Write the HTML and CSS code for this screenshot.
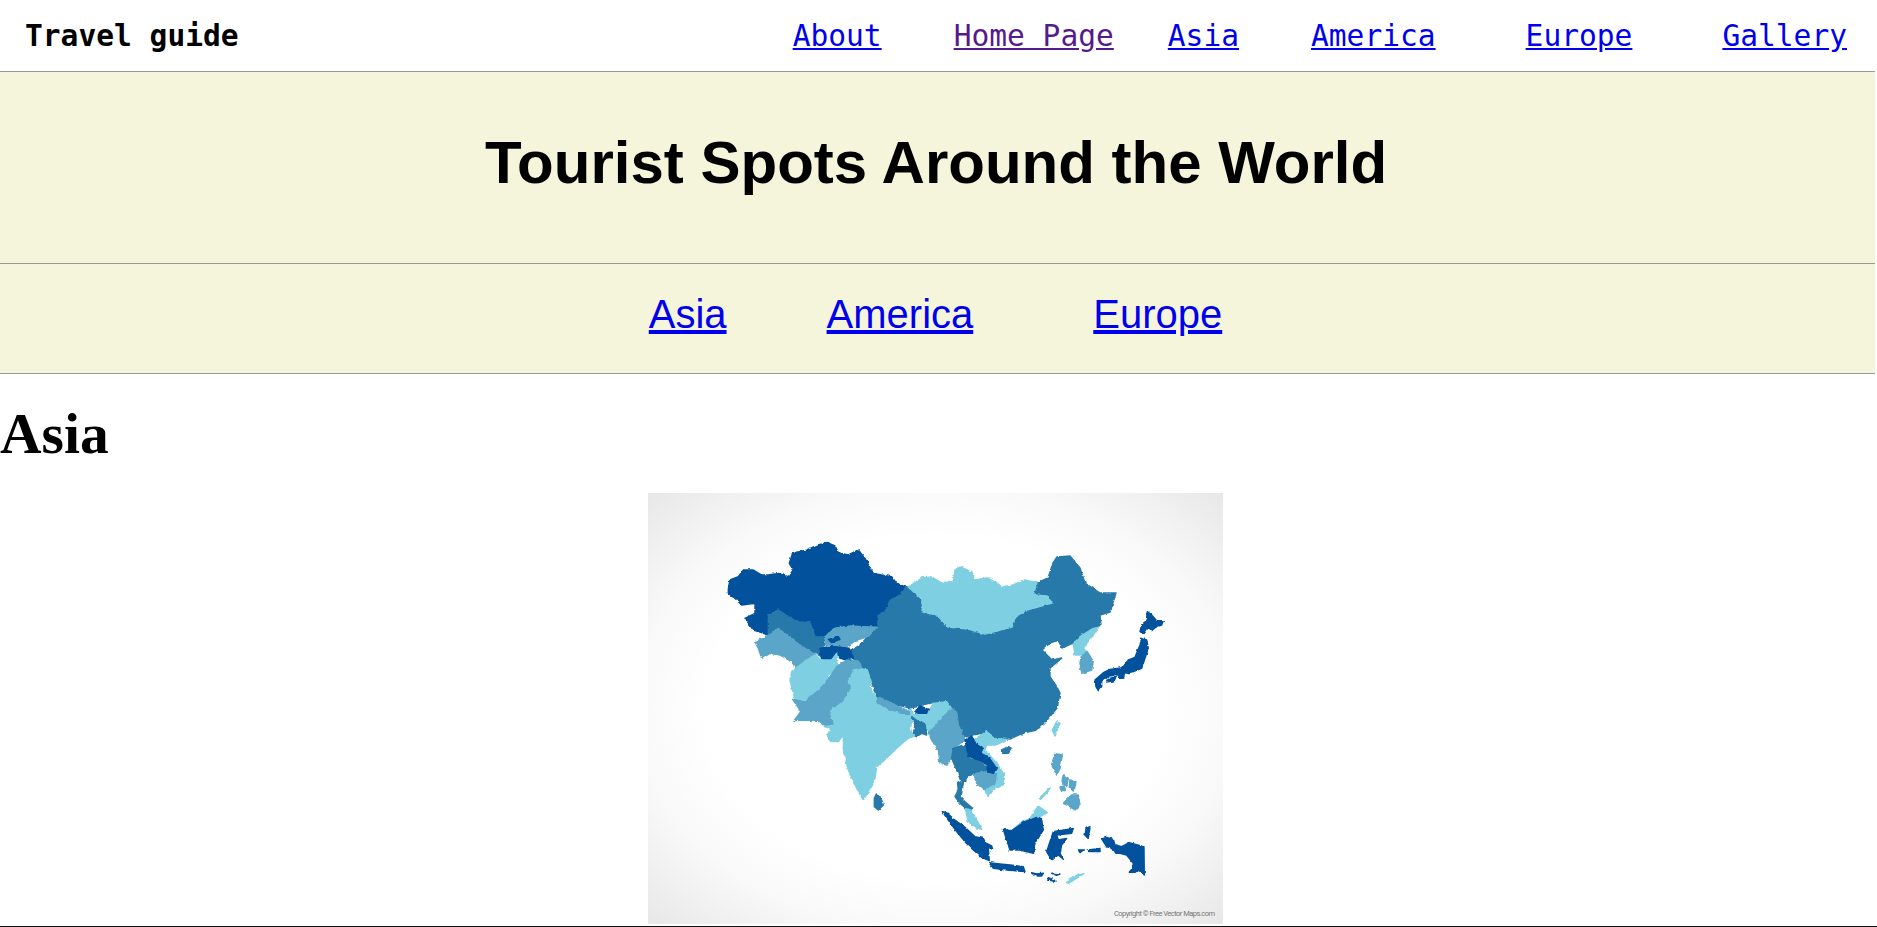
FILE: index.html
```html
<!DOCTYPE html>
<html lang="en">
<head>
  <meta charset="UTF-8" />
  <title>Travel guide</title>
  <meta name="viewport" content="width=device-width, initial-scale=1.0" />
  <link rel="stylesheet" href="styles.css">
</head>
<body>

  <nav class="topnav">
    <div class="brand">Travel guide</div>
    <div class="toplinks">
      <a href="#about">About</a>
      <a href="#home" class="visited wider">Home Page</a>
      <a href="#asia">Asia</a>
      <a href="#america" class="wider">America</a>
      <a href="#europe" class="widest">Europe</a>
      <a href="#gallery" class="widest">Gallery</a>
    </div>
  </nav>

  <header class="banner">
    <h1>Tourist Spots Around the World</h1>
  </header>

  <div class="subnav">
    <a href="#asia">Asia</a>
    <a href="#america">America</a>
    <a href="#europe" class="last">Europe</a>
  </div>

  <h2 class="region" id="asia">Asia</h2>

  <svg class="map" viewBox="648 493 575 431" role="img" aria-label="Map of Asia">
    <defs>
      <radialGradient id="vignette" cx="50%" cy="50%" r="72%">
        <stop offset="0.55" stop-color="#ffffff" />
        <stop offset="0.72" stop-color="#f9f9f9" />
        <stop offset="1" stop-color="#e6e6e6" />
      </radialGradient>
      <filter id="rough" x="0" y="0" width="100%" height="100%" color-interpolation-filters="sRGB">
        <feTurbulence type="fractalNoise" baseFrequency=".25" numOctaves="2" seed="4" result="noise" />
        <feDisplacementMap in="SourceGraphic" in2="noise" scale="3" xChannelSelector="R" yChannelSelector="G" />
        <feGaussianBlur stdDeviation=".6" />
      </filter>
    </defs>
    <rect x="648" y="493" width="575" height="431" fill="url(#vignette)" />

    <g filter="url(#rough)">
      <rect x="648" y="493" width="575" height="431" fill="none" />

      <!-- china, page coordinates -->
      <polygon class="mid" points="905,587 908,587 923,600 922,612 937,615 948,627 968,629 985,634 1012,627 1015,617 1027,610 1052,603 1047,596 1033,595 1037,583 1048,578 1053,563 1057,557 1070,556 1080,568 1085,583 1100,593 1116,593 1110,612 1100,615 1101,625 1093,628 1080,637 1073,643 1062,648 1058,640 1050,643 1042,650 1047,655 1052,660 1062,658 1050,668 1050,677 1057,687 1060,693 1057,708 1047,720 1037,730 1023,733 1010,739 993,738 988,732 973,735 965,737 957,722 953,710 947,702 930,703 915,707 910,708 890,703 877,698 872,683 868,673 857,663 848,652 860,645 877,627 877,615 885,610 888,600 900,593" />
      <polygon class="light" points="908,587 922,578 932,577 940,582 953,583 955,570 960,567 972,572 975,580 987,578 997,583 1002,587 1013,585 1025,580 1037,583 1033,595 1047,596 1052,603 1027,610 1015,617 1012,627 985,634 968,629 948,627 937,615 922,612 923,600" />

      <!-- central asia, crop at 700,520 x3 -->
      <g transform="translate(700 520) scale(.3333)">
        <polygon class="dark" points="85,205 90,180 115,170 130,150 160,150 185,165 205,165 235,160 265,170 280,150 268,130 278,100 320,90 355,75 380,67 405,78 415,98 445,105 475,90 495,115 520,160 545,165 575,170 590,190 615,200 600,220 565,240 555,270 530,285 530,320 490,318 450,320 400,325 375,350 345,350 330,310 290,305 235,270 205,285 205,345 175,335 160,330 135,295 165,280 165,250 125,255 105,235 85,220" />
        <polygon class="mid" points="205,285 235,270 290,305 330,308 345,350 372,352 375,375 360,385 365,410 345,400 320,385 285,365 260,345 235,325 210,345 205,345" />
        <polygon class="pale" points="165,365 190,355 205,345 235,325 260,345 285,365 345,405 320,420 290,447 275,425 240,405 210,400 185,415 175,385" />
        <polygon class="dark" points="360,385 395,378 420,380 450,385 460,415 440,420 420,415 410,400 395,420 365,420" />
        <polygon class="pale" points="375,352 400,325 450,318 490,320 530,322 505,350 470,360 440,380 400,375 380,375" />
        <polygon class="dark" points="385,358 415,350 420,358 395,368" />
        <polygon class="light" points="275,455 320,420 345,405 365,420 395,420 410,400 415,440 385,465 370,510 340,520 325,540 285,540 270,480" />
      </g>

      <!-- south and southeast mainland, crop at 780,670 x3 -->
      <g transform="translate(780 670) scale(.3333)">
        <polygon class="pale" points="38,88 75,95 105,70 130,50 150,20 170,-10 200,-30 240,-25 245,0 205,35 215,55 190,95 150,125 165,165 135,170 115,150 42,152 62,125 50,105" />
        <polygon class="light" points="205,35 222,0 240,-5 262,0 275,40 270,55 290,85 330,110 390,135 395,155 390,175 400,200 385,205 350,235 320,265 290,290 285,325 275,350 250,390 235,365 205,300 190,240 190,195 175,215 155,215 140,195 155,180 135,170 165,165 150,125 190,95 215,55" />
        <polygon class="pale" points="295,80 345,105 390,125 390,135 330,118 290,98" />
        <polygon class="light" points="390,115 400,130 440,135 460,100 500,95 515,115 490,140 465,175 450,195 435,160 415,155 395,140" />
        <polygon class="dark" points="405,125 420,108 445,118 440,130 415,130" />
        <polygon class="mid" points="395,140 415,155 435,160 440,195 425,190 410,200 400,190 405,165" />
        <polygon class="pale" points="490,140 515,115 530,125 535,165 555,210 520,235 515,265 500,285 480,280 475,240 455,210 445,190 465,170" />
        <polygon class="light" points="580,210 620,185 645,205 680,208 650,225 620,225 615,240 650,280 670,310 670,345 640,360 625,380 615,360 610,358 645,340 650,300 625,260 600,250 610,235 590,225" />
        <polygon class="mid" points="520,235 550,225 575,255 565,265 590,270 620,290 620,305 580,310 555,330 545,340 530,300 515,265" />
        <polygon class="mid" points="532,335 550,340 545,370 540,380 555,395 578,415 565,422 540,400 525,380 535,360" />
        <polygon class="pale" points="580,312 620,305 650,310 645,340 610,358 590,340" />
        <polygon class="dark" points="555,210 575,198 590,225 610,235 600,250 625,260 650,295 640,310 622,305 622,285 595,270 565,258" />
        <polygon class="mid" points="665,240 685,230 695,235 685,250 670,250" />
        <polygon class="mid" points="290,370 305,390 310,405 295,420 283,410 283,385" />
      </g>

      <!-- korea, crop at 880,540 x3 -->
      <g transform="translate(880 540) scale(.3333)">
        <polygon class="light" points="580,312 600,290 640,265 655,262 640,285 620,310 610,325 620,335 600,345 585,345" />
        <polygon class="pale" points="605,345 622,335 640,365 635,390 605,400 600,370" />
      </g>

      <!-- japan and taiwan, crop at 960,580 x3 -->
      <g transform="translate(960 580) scale(.3333)">
        <polygon class="dark" points="405,300 430,278 450,268 488,263 505,240 525,232 540,195 545,175 560,180 565,205 555,235 545,265 520,275 495,280 490,295 478,295 472,282 445,290 425,300 425,320 415,332 408,320" />
        <polygon class="dark" points="445,296 470,290 462,302 440,306" />
        <polygon class="dark" points="562,95 575,105 590,122 610,122 605,135 590,140 575,152 560,145 550,160 540,155 545,135 555,130 560,115" />
        <polygon class="light" points="290,425 300,430 285,468 277,450" />
      </g>

      <!-- philippines, crop at 900,700 x3 -->
      <g transform="translate(900 700) scale(.3333)">
        <polygon class="pale" points="465,160 487,165 480,205 470,225 455,195" />
        <polygon class="pale" points="490,225 505,235 500,260 485,250" />
        <polygon class="pale" points="510,240 528,245 522,275 508,262" />
        <polygon class="pale" points="480,262 492,258 496,272 484,272" />
        <polygon class="pale" points="515,285 535,285 540,315 525,330 510,320 490,310" />
        <polygon class="light" points="418,295 450,263 448,270 422,298" />
      </g>

      <!-- indonesia and malaysia, crop at 840,740 x3 -->
      <g transform="translate(840 740) scale(.3333)">
        <polygon class="light" points="375,205 395,212 410,240 425,268 410,262 385,245" />
        <polygon class="light" points="518,270 540,250 570,235 595,198 622,218 600,230 575,232 555,245 525,272" />
        <polygon class="dark" points="490,268 515,272 555,245 590,232 605,240 610,270 585,310 580,340 540,330 510,330 500,300" />
        <polygon class="dark" points="307,215 320,218 345,240 375,262 405,290 430,295 445,325 448,362 425,352 400,330 375,305 350,275 325,240" />
        <polygon class="dark" points="447,368 480,372 510,375 550,380 555,395 500,390 460,385" />
        <polygon class="dark" points="640,275 700,265 695,280 650,285 655,300 680,295 665,315 660,340 670,358 655,345 635,360 620,335 630,305" />
        <polygon class="dark" points="738,265 750,260 745,295 735,290" />
        <polygon class="dark" points="715,330 730,330 720,338" />
        <polygon class="dark" points="745,330 780,325 780,335 750,335" />
        <polygon class="dark" points="785,297 800,292 820,298 825,315 845,320 868,308 912,320 913,405 895,390 885,397 868,397 878,385 880,370 860,345 840,340 825,340 815,325 800,320" />
        <polygon class="dark" points="575,398 590,402 578,405" />
        <polygon class="dark" points="590,402 610,400 605,408 592,408" />
        <polygon class="dark" points="635,400 660,402 650,406" />
        <polygon class="dark" points="622,412 640,418 645,424 625,420" />
        <polygon class="light" points="680,425 720,400 730,402 685,430" />
        <polygon class="dark" points="440,310 455,318 458,328 445,322" />
      </g>
    </g>

    <text class="credit" x="1114" y="916" textLength="101">Copyright © Free Vector Maps.com</text>
  </svg>

  <footer class="pagefoot"></footer>

</body>
</html>
```

FILE: styles.css
```css
body {
  margin: 0;
  background: white;
  color: black;
  font-family: "Liberation Serif", serif;
}
a { color: #0000ee; }
a.visited { color: #551a8b; }

.topnav {
  display: flex;
  justify-content: space-between;
  align-items: center;
  height: 71px;
  padding: 0 30px 0 25px;
  box-sizing: border-box;
  font-family: "DejaVu Sans Mono", monospace;
  font-size: 29.57px;
}
.brand { font-weight: bold; }
.toplinks {
  display: flex;
  gap: 54px;
}
.toplinks .wider { margin-left: 18px; }
.toplinks .widest { margin-left: 36px; }

.banner, .subnav {
  width: 1875px;
  box-sizing: border-box;
  background: #f5f5dc;
  border-top: 1px solid #999;
  font-family: "Liberation Sans", sans-serif;
}
.banner { padding: 57px 3px 67px 0; }
.banner h1 {
  margin: 0;
  font-size: 60px;
  line-height: 67px;
  text-align: center;
}
.subnav {
  display: flex;
  justify-content: center;
  gap: 100px;
  padding: 28px 4px 36px 0;
  border-bottom: 1px solid #999;
  font-size: 40px;
  line-height: 45px;
}
.subnav .last { margin-left: 20px; }

.region {
  margin: 28px 0 28px;
  font-size: 57.5px;
  line-height: 63px;
}

.map {
  display: block;
  width: 575px;
  height: 431px;
  margin-left: 648px;
}
.map polygon {
  stroke-width: 1.4;
  stroke-linejoin: round;
  vector-effect: non-scaling-stroke;
}
.dark { fill: #02519c; stroke: #02519c; }
.mid { fill: #2779aa; stroke: #2779aa; }
.pale { fill: #5aa5c8; stroke: #5aa5c8; }
.light { fill: #7fcfe3; stroke: #7fcfe3; }
.credit {
  font-family: "Roboto", sans-serif;
  font-size: 7.5px;
  fill: #777;
}

.pagefoot {
  margin-top: 2px;
  border-top: 1px solid #111;
}
```
